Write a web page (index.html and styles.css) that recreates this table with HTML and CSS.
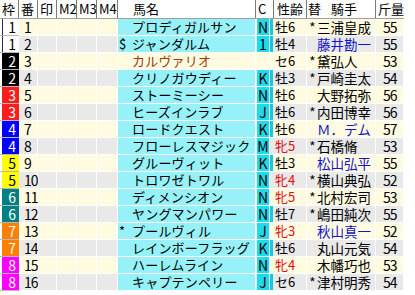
FILE: index.html
```html
<!DOCTYPE html>
<html lang="ja">
<head>
<meta charset="utf-8">
<link rel="stylesheet" href="styles.css">
</head>
<body>
<div class="table">
  <div class="head">
    <div class="h">枠</div>
    <div class="h">番</div>
    <div class="h">印</div>
    <div class="h hm">M2</div>
    <div class="h hm">M3</div>
    <div class="h hm">M4</div>
    <div class="h hname">馬名</div>
    <div class="h hc">C</div>
    <div class="h hsex">性齢</div>
    <div class="h hjk"><span class="kae">替</span><span>騎手</span></div>
    <div class="h hkg">斤量</div>
  </div>

  <div class="row odd">
    <div class="cw"><span class="waku w1">1</span></div><div class="cn">1</div><div class="cm"></div><div class="cm"></div><div class="cm"></div><div class="cm"></div>
    <div class="cname"><span class="pre"></span><span>プロディガルサン</span></div><div class="cc"><span class="cb">N</span></div>
    <div class="csex m">牡6</div><div class="cjk"><span class="pre">*</span><span>三浦皇成</span></div><div class="ckg">55</div>
  </div>
  <div class="row even">
    <div class="cw"><span class="waku w1">1</span></div><div class="cn">2</div><div class="cm"></div><div class="cm"></div><div class="cm"></div><div class="cm"></div>
    <div class="cname"><span class="pre">$</span><span>ジャンダルム</span></div><div class="cc"><span class="cb">1</span></div>
    <div class="csex m">牡4</div><div class="cjk blue"><span class="pre"></span><span>藤井勘一</span></div><div class="ckg">55</div>
  </div>
  <div class="row odd scratch">
    <div class="cw"><span class="waku w2">2</span></div><div class="cn">3</div><div class="cm"></div><div class="cm"></div><div class="cm"></div><div class="cm"></div>
    <div class="cname"><span class="pre"></span><span>カルヴァリオ</span></div><div class="cc"></div>
    <div class="csex">セ6</div><div class="cjk"><span class="pre">*</span><span>黛弘人</span></div><div class="ckg">53</div>
  </div>
  <div class="row even">
    <div class="cw"><span class="waku w2">2</span></div><div class="cn">4</div><div class="cm"></div><div class="cm"></div><div class="cm"></div><div class="cm"></div>
    <div class="cname"><span class="pre"></span><span>クリノガウディー</span></div><div class="cc"><span class="cb">K</span></div>
    <div class="csex m">牡3</div><div class="cjk"><span class="pre">*</span><span>戸崎圭太</span></div><div class="ckg">54</div>
  </div>
  <div class="row odd">
    <div class="cw"><span class="waku w3">3</span></div><div class="cn">5</div><div class="cm"></div><div class="cm"></div><div class="cm"></div><div class="cm"></div>
    <div class="cname"><span class="pre"></span><span>ストーミーシー</span></div><div class="cc"><span class="cb">N</span></div>
    <div class="csex m">牡6</div><div class="cjk"><span class="pre"></span><span>大野拓弥</span></div><div class="ckg">56</div>
  </div>
  <div class="row even">
    <div class="cw"><span class="waku w3">3</span></div><div class="cn">6</div><div class="cm"></div><div class="cm"></div><div class="cm"></div><div class="cm"></div>
    <div class="cname"><span class="pre"></span><span>ヒーズインラブ</span></div><div class="cc"><span class="cb">J</span></div>
    <div class="csex m">牡6</div><div class="cjk"><span class="pre">*</span><span>内田博幸</span></div><div class="ckg">56</div>
  </div>
  <div class="row odd">
    <div class="cw"><span class="waku w4">4</span></div><div class="cn">7</div><div class="cm"></div><div class="cm"></div><div class="cm"></div><div class="cm"></div>
    <div class="cname"><span class="pre"></span><span>ロードクエスト</span></div><div class="cc"><span class="cb">K</span></div>
    <div class="csex m">牡6</div><div class="cjk blue"><span class="pre"></span><span>Ｍ．デム</span></div><div class="ckg">57</div>
  </div>
  <div class="row even">
    <div class="cw"><span class="waku w4">4</span></div><div class="cn">8</div><div class="cm"></div><div class="cm"></div><div class="cm"></div><div class="cm"></div>
    <div class="cname"><span class="pre"></span><span>フローレスマジック</span></div><div class="cc"><span class="cb">M</span></div>
    <div class="csex f">牝5</div><div class="cjk"><span class="pre">*</span><span>石橋脩</span></div><div class="ckg">53</div>
  </div>
  <div class="row odd">
    <div class="cw"><span class="waku w5">5</span></div><div class="cn">9</div><div class="cm"></div><div class="cm"></div><div class="cm"></div><div class="cm"></div>
    <div class="cname"><span class="pre"></span><span>グルーヴィット</span></div><div class="cc"><span class="cb">K</span></div>
    <div class="csex m">牡3</div><div class="cjk blue"><span class="pre"></span><span>松山弘平</span></div><div class="ckg">55</div>
  </div>
  <div class="row even">
    <div class="cw"><span class="waku w5">5</span></div><div class="cn">10</div><div class="cm"></div><div class="cm"></div><div class="cm"></div><div class="cm"></div>
    <div class="cname"><span class="pre"></span><span>トロワゼトワル</span></div><div class="cc"><span class="cb">N</span></div>
    <div class="csex f">牝4</div><div class="cjk"><span class="pre">*</span><span>横山典弘</span></div><div class="ckg">52</div>
  </div>
  <div class="row odd">
    <div class="cw"><span class="waku w6">6</span></div><div class="cn">11</div><div class="cm"></div><div class="cm"></div><div class="cm"></div><div class="cm"></div>
    <div class="cname"><span class="pre"></span><span>ディメンシオン</span></div><div class="cc"><span class="cb">N</span></div>
    <div class="csex f">牝5</div><div class="cjk"><span class="pre">*</span><span>北村宏司</span></div><div class="ckg">53</div>
  </div>
  <div class="row even">
    <div class="cw"><span class="waku w6">6</span></div><div class="cn">12</div><div class="cm"></div><div class="cm"></div><div class="cm"></div><div class="cm"></div>
    <div class="cname"><span class="pre"></span><span>ヤングマンパワー</span></div><div class="cc"><span class="cb">N</span></div>
    <div class="csex m">牡7</div><div class="cjk"><span class="pre">*</span><span>嶋田純次</span></div><div class="ckg">55</div>
  </div>
  <div class="row odd">
    <div class="cw"><span class="waku w7">7</span></div><div class="cn">13</div><div class="cm"></div><div class="cm"></div><div class="cm"></div><div class="cm"></div>
    <div class="cname"><span class="pre">*</span><span>プールヴィル</span></div><div class="cc"><span class="cb">J</span></div>
    <div class="csex f">牝3</div><div class="cjk blue"><span class="pre"></span><span>秋山真一</span></div><div class="ckg">52</div>
  </div>
  <div class="row even">
    <div class="cw"><span class="waku w7">7</span></div><div class="cn">14</div><div class="cm"></div><div class="cm"></div><div class="cm"></div><div class="cm"></div>
    <div class="cname"><span class="pre"></span><span>レインボーフラッグ</span></div><div class="cc"><span class="cb">K</span></div>
    <div class="csex m">牡6</div><div class="cjk"><span class="pre"></span><span>丸山元気</span></div><div class="ckg">54</div>
  </div>
  <div class="row odd">
    <div class="cw"><span class="waku w8">8</span></div><div class="cn">15</div><div class="cm"></div><div class="cm"></div><div class="cm"></div><div class="cm"></div>
    <div class="cname"><span class="pre"></span><span>ハーレムライン</span></div><div class="cc"><span class="cb">N</span></div>
    <div class="csex f">牝4</div><div class="cjk"><span class="pre"></span><span>木幡巧也</span></div><div class="ckg">53</div>
  </div>
  <div class="row even">
    <div class="cw"><span class="waku w8">8</span></div><div class="cn">16</div><div class="cm"></div><div class="cm"></div><div class="cm"></div><div class="cm"></div>
    <div class="cname"><span class="pre"></span><span>キャプテンペリー</span></div><div class="cc"><span class="cb">J</span></div>
    <div class="csex m">セ6</div><div class="cjk"><span class="pre">*</span><span>津村明秀</span></div><div class="ckg">54</div>
  </div>
</div>
</body>
</html>
```

FILE: styles.css
```css
html, body {
  margin: 0;
  padding: 0;
  background: #ffffff;
}
body {
  font-family: "Noto Sans CJK JP", "Noto Sans", sans-serif;
  color: #000;
}
.table {
  width: 404px;
}

/* header */
.head {
  display: grid;
  grid-template-columns: 19px 19px 19px 20px 20px 21px 138px 18px 33px 69px 28px;
  height: 18px;
  border-bottom: 1px solid #a0a0a0;
  background: #ffffff;
  font-size: 13px;
}
.h {
  box-sizing: border-box;
  height: 18px;
  line-height: 18px;
  padding-left: 2px;
  border-right: 1px solid #7a7a7a;
  white-space: nowrap;
}
.hm { padding-left: 2px; }
.hname { padding-left: 15px; }
.hc { padding-left: 2px; }
.hsex { padding-left: 3px; }
.hjk { padding-left: 1px; display: flex; }
.kae { margin-right: 10px; }
.hkg { padding-left: 2px; border-right: none; }

/* rows */
.row {
  display: grid;
  grid-template-columns: 19px 19px 19px 20px 20px 21px 138px 14px 37px 69px 28px;
  height: 17px;
  font-size: 13px;
}
.row > div {
  box-sizing: border-box;
  height: 17px;
  line-height: 16px;
  border-right: 1px solid #ffffff;
  border-bottom: 1px solid #ffffff;
  white-space: nowrap;
}
.odd > div { background: #fffbe0; }
.even > div { background: #e9e9e9; }

.row > .cw {
  background: #ffffff;
  border-right: none;
  border-bottom-color: #b8b8b8;
}
.waku {
  display: block;
  height: 16px;
  margin-left: 2px;
  text-align: right;
  padding-right: 3px;
  font-size: 14px;
}
.w1 { background: #ffffff; color: #000; box-shadow: inset 1px 0 0 #303030; }
.w2 { background: #000000; color: #fff; }
.w3 { background: #ff1c1c; color: #fff; }
.w4 { background: #0000ff; color: #fff; }
.w5 { background: #ffff00; color: #000; }
.w6 { background: #008080; color: #fff; }
.w7 { background: #ff8000; color: #fff; }
.w8 { background: #ff00ff; color: #fff; }

.row > .cn {
  padding-left: 5px;
  font-size: 14px;
  letter-spacing: -1px;
}

.row > .cname {
  display: flex;
  background: #96f2f8;
  letter-spacing: 0.2px;
}
.scratch > .cname { background: #fffbe0; color: #a03808; }
.cname .pre {
  flex: 0 0 13px;
  padding-left: 1px;
  letter-spacing: 0;
}

.row > .cc { padding-left: 1px; }
.cb {
  display: block;
  width: 12px;
  height: 16px;
  background: #1cdcec;
  text-align: center;
  font-size: 14px;
}

.row > .csex { padding-left: 5px; }
.row > .csex.m { box-shadow: inset 3px 0 0 #14c8e0; }
.row > .csex.f { color: #e01010; }

.row > .cjk { display: flex; padding-left: 1px; font-size: 13.5px; }
.cjk .pre {
  flex: 0 0 9px;
  text-align: center;
}
.row > .cjk.blue { color: #1414c8; }

.row > .ckg {
  padding-left: 7px;
  font-size: 14px;
  letter-spacing: -1px;
}
```
